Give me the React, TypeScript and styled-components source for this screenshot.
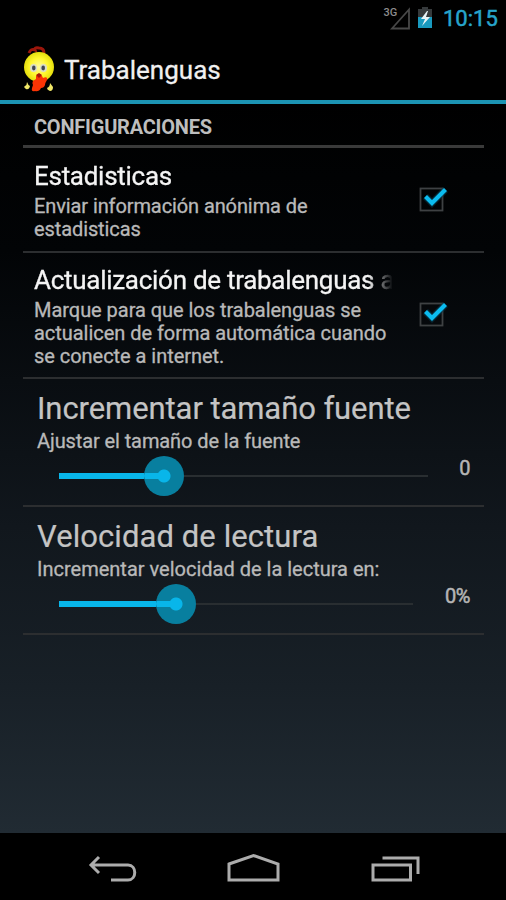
import React from 'react';
import styled, { createGlobalStyle } from 'styled-components';

const GlobalStyle = createGlobalStyle`
  * { box-sizing: border-box; }
  body { margin: 0; background: #000; font-family: Roboto, "Open Sans", sans-serif; }
`;

const Screen = styled.div`
  width: 506px;
  height: 900px;
  display: flex;
  flex-direction: column;
  overflow: hidden;
  background: #000;
`;

const StatusBar = styled.header`
  height: 38px;
  padding: 0 8px 0 0;
  display: flex;
  justify-content: flex-end;
  align-items: flex-start;
`;

const Clock = styled.time`
  width: 55px;
  margin-left: 10px;
  padding-top: 5px;
  font-size: 22px;
  line-height: 28px;
  color: #27a5cb;
  -webkit-text-stroke: 0.5px #27a5cb;
  white-space: nowrap;
`;

const ActionBar = styled.div`
  height: 66px;
  padding-left: 20px;
  display: flex;
  align-items: center;
  border-bottom: 4px solid #1c94b3;
`;

const AppTitle = styled.h1`
  margin: 2px 0 0 4px;
  font-size: 26px;
  line-height: 34px;
  font-weight: 400;
  letter-spacing: 0;
  color: #f0f0f0;
  -webkit-text-stroke: 0.3px #f0f0f0;
`;

const Settings = styled.main`
  height: 729px;
  padding: 0 22px 0 23px;
  background: linear-gradient(#000 0%, #020406 20%, #090d11 38%, #11171d 58%, #182027 80%, #212b33 100%);
`;

const SectionTitle = styled.h2`
  margin: 0;
  height: 44px;
  padding: 10px 0 0 11px;
  font-size: 20px;
  line-height: 26px;
  font-weight: 700;
  letter-spacing: -0.22px;
  color: #bebebe;
  border-bottom: 3px solid #3a3a3a;
`;

const Row = styled.section<{ $height: number }>`
  height: ${(p) => p.$height}px;
  border-bottom: 2px solid #2c2e30;
`;

const CheckRow = styled(Row)`
  display: grid;
  grid-template-columns: 358px 1fr;
  padding: 2px 0 0 11px;
  align-items: center;
`;

const CheckTitle = styled.h3`
  margin: 0 0 3px;
  font-size: 26px;
  line-height: 32px;
  font-weight: 400;
  letter-spacing: -0.28px;
  color: #f4f4f4;
  -webkit-text-stroke: 0.3px #f4f4f4;
  white-space: nowrap;
  mask-image: linear-gradient(90deg, #000 334px, transparent 359px);
`;

const Summary = styled.p<{ $spacing: number }>`
  margin: 0;
  font-size: 20px;
  line-height: 23px;
  letter-spacing: ${(p) => p.$spacing}px;
  color: #b9b9b9;
  -webkit-text-stroke: 0.3px #b9b9b9;
  white-space: nowrap;
`;

const CheckIcon = styled.svg`
  display: block;
  margin: -2px 0 0 23px;
`;

const SliderRow = styled(Row)`
  padding: 11px 14px 0 14px;
`;

const SliderTitle = styled.h3<{ $spacing: number }>`
  margin: 0 0 2px;
  font-size: 31px;
  line-height: 38px;
  font-weight: 400;
  letter-spacing: ${(p) => p.$spacing}px;
  color: #c4c4c4;
  -webkit-text-stroke: 0.2px #c4c4c4;
  white-space: nowrap;
`;

const SliderLine = styled.div`
  display: flex;
  justify-content: space-between;
  height: 42px;
  margin-top: 2px;
  padding-left: 22px;
`;

const Track = styled.div<{ $width: number }>`
  width: ${(p) => p.$width}px;
  height: 42px;
  display: flex;
  align-items: center;
`;

const Filled = styled.div<{ $width: number }>`
  width: ${(p) => p.$width}px;
  height: 6px;
  background: #08b6ea;
`;

const Thumb = styled.div`
  width: 40px;
  height: 40px;
  flex: none;
  border-radius: 50%;
  background: linear-gradient(#08b6ea, #08b6ea) 0 50% / 20px 6px no-repeat,
    radial-gradient(circle, #08b6ea 6px, #087f9f 7px);
`;

const Remaining = styled.div`
  flex: 1;
  height: 2px;
  background: #292e31;
`;

const Value = styled.output`
  font-size: 20px;
  line-height: 26px;
  letter-spacing: -0.4px;
  color: #b5b5b5;
  -webkit-text-stroke: 0.5px #b5b5b5;
`;

const NavBar = styled.nav`
  height: 67px;
  display: flex;
  justify-content: center;
`;

const NavIcon = styled.svg`
  width: 142px;
  height: 67px;
  fill: none;
  stroke: #acacac;
  stroke-width: 3;
`;

const StatusIcons = () => (
  <svg width="50" height="38" viewBox="383 0 50 38">
    <text x="383.5" y="16" fontSize="11" fontWeight="500" fill="#8c8c8c" fontFamily="Roboto, sans-serif">3G</text>
    <path d="M392 28.5H409V9.5Z" fill="none" stroke="#484848" strokeWidth="1.8" />
    <path d="M418 9h4V7h6v2h4v19h-14z" fill="#363a3c" />
    <path d="M418 17h14v11h-14z" fill="#199abf" />
    <path d="m427 11-6 8h4l-3 7 8-9h-4l2-6z" fill="#e8f4f7" />
  </svg>
);

const Mascot = () => (
  <svg width="40" height="50" viewBox="20 44 40 50">
    <defs>
      <radialGradient id="face">
        <stop offset="0" stopColor="#fffa9b" />
        <stop offset=".6" stopColor="#fff72c" />
        <stop offset="1" stopColor="#e4dd0c" />
      </radialGradient>
    </defs>
    <path d="M29 53q2-5 6-3-1-3 4-2 5 0 5 5" fill="none" stroke="#9c160b" strokeWidth="3" />
    <circle cx="39" cy="67" r="15" fill="url(#face)" />
    <ellipse cx="33.5" cy="68" rx="3.5" ry="4" fill="#d9dcc9" />
    <ellipse cx="43.5" cy="68" rx="3.5" ry="4" fill="#d9dcc9" />
    <ellipse cx="33.8" cy="68" rx="1.8" ry="2.4" fill="#414653" />
    <ellipse cx="43.2" cy="68" rx="1.8" ry="2.4" fill="#414653" />
    <path d="M36 76q3-4 6 0l1 2q5-2 4 2-2 3-2 5-1 3-4 3-2 4-6 3-4 1-3-3l1-3q-2-4 3-6z" fill="#fb3404" />
    <path d="m36 75 3-2 3 2-3 3z" fill="#a51408" />
    <path d="M27 82q1 3 3 4-1 4-4 3-3-2-1-3 2-1 2-4zM50 83l3 4q0 4-3 4-3-1-3-3 3-1 3-5z" fill="#f1e868" />
  </svg>
);

const Checkbox = () => (
  <CheckIcon width="40" height="36" viewBox="415 182 40 36">
    <rect x="420.5" y="188.5" width="22" height="22" fill="none" stroke="#3e4143" strokeWidth="1.8" />
    <path d="m425.5 196.5 6.5 6.5 13.5-13.5" fill="none" stroke="#063c50" strokeWidth="7" opacity=".6" />
    <path d="m425.5 196.5 6.5 6.5 13.5-13.5" fill="none" stroke="#0bbcf0" strokeWidth="4.2" />
  </CheckIcon>
);

type SliderProps = { filled: number; width: number; value: string };

const Slider = ({ filled, width, value }: SliderProps) => (
  <SliderLine>
    <Track $width={width}>
      <Filled $width={filled} />
      <Thumb />
      <Remaining />
    </Track>
    <Value>{value}</Value>
  </SliderLine>
);

export default function App() {
  return (
    <Screen>
      <GlobalStyle />
      <StatusBar>
        <StatusIcons />
        <Clock>10:15</Clock>
      </StatusBar>
      <ActionBar>
        <Mascot />
        <AppTitle>Trabalenguas</AppTitle>
      </ActionBar>
      <Settings>
        <SectionTitle>CONFIGURACIONES</SectionTitle>
        <CheckRow $height={105}>
          <div>
            <CheckTitle>Estadisticas</CheckTitle>
            <Summary $spacing={-0.1}>Enviar información anónima de<br />estadisticas</Summary>
          </div>
          <Checkbox />
        </CheckRow>
        <CheckRow $height={126}>
          <div>
            <CheckTitle>Actualización de trabalenguas a</CheckTitle>
            <Summary $spacing={-0.04}>
              Marque para que los trabalenguas se<br />actualicen de forma automática cuando<br />se conecte a internet.
            </Summary>
          </div>
          <Checkbox />
        </CheckRow>
        <SliderRow $height={128}>
          <SliderTitle $spacing={-0.08}>Incrementar tamaño fuente</SliderTitle>
          <Summary $spacing={-0.1}>Ajustar el tamaño de la fuente</Summary>
          <Slider filled={85} width={369} value="0" />
        </SliderRow>
        <SliderRow $height={128}>
          <SliderTitle $spacing={0.08}>Velocidad de lectura</SliderTitle>
          <Summary $spacing={0}>Incrementar velocidad de la lectura en:</Summary>
          <Slider filled={97} width={354} value="0%" />
        </SliderRow>
      </Settings>
      <NavBar>
        <NavIcon viewBox="40 833 142 67">
          <path d="M99 857 91 865l8 8M92 865h36c9 0 9 15 0 15h-17" />
        </NavIcon>
        <NavIcon viewBox="182.5 833 142 67">
          <path d="M229.5 864 254 855.5 278.5 864V880h-49z" />
        </NavIcon>
        <NavIcon viewBox="324 833 142 67">
          <path d="M373 865h37.5v15H373zM382.5 858H418v16" />
        </NavIcon>
      </NavBar>
    </Screen>
  );
}
